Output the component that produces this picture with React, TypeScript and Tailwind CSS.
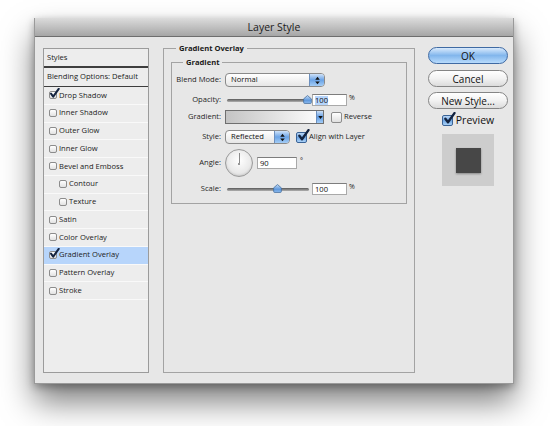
import React from "react";

const FONT = { fontFamily: '"Open Sans", "Liberation Sans", sans-serif' };

function CheckMark({ className = "" }: { className?: string }) {
  return (
    <svg viewBox="0 0 12 12" className={className}>
      <path
        d="M2.2 6.2 L4.6 9.4 L10.6 1"
        fill="none"
        stroke="#13233f"
        strokeWidth="2.2"
        strokeLinecap="round"
        strokeLinejoin="round"
      />
    </svg>
  );
}

function ListBox({ checked }: { checked?: boolean }) {
  return (
    <span className="relative flex h-[8px] w-[8px] shrink-0 rounded-[2px] border border-[#8c8c8c] bg-gradient-to-b from-white to-[#e2e2e2]">
      {checked && <CheckMark className="absolute left-[-1px] top-[-4px] h-[11px] w-[11px]" />}
    </span>
  );
}

function AquaCheck({ checked }: { checked?: boolean }) {
  return checked ? (
    <span className="relative flex h-[11px] w-[11px] shrink-0 rounded-[2px] border border-[#3a6396] bg-gradient-to-b from-[#bcd8f6] via-[#6fa6e4] to-[#a9d1f7]">
      <CheckMark className="absolute left-[0px] top-[-4px] h-[13px] w-[13px]" />
    </span>
  ) : (
    <span className="flex h-[11px] w-[11px] shrink-0 rounded-[2px] border border-[#8c8c8c] bg-gradient-to-b from-white to-[#e0e0e0]" />
  );
}

function Row({
  label,
  checked,
  selected,
  indent,
}: {
  label: string;
  checked?: boolean;
  selected?: boolean;
  indent?: boolean;
}) {
  return (
    <div
      className={`flex h-[17.75px] items-center gap-[2px] border-b border-[#f9f9f9] ${
        indent ? "pl-[15px]" : "pl-[5px]"
      } ${selected ? "bg-[#b7d5fb]" : ""}`}
    >
      <ListBox checked={checked} />
      <span className="text-[7.6px] leading-none text-[#1b1b1b]">{label}</span>
    </div>
  );
}

function Thumb() {
  return (
    <svg viewBox="0 0 10 10" className="h-[9px] w-[9px]">
      <defs>
        <linearGradient id="tg" x1="0" y1="0" x2="0" y2="1">
          <stop offset="0" stopColor="#c5ddf7" />
          <stop offset="0.6" stopColor="#5f98dc" />
          <stop offset="1" stopColor="#8fbdf0" />
        </linearGradient>
      </defs>
      <path d="M5 0.6 L9.3 4.3 V8.2 Q9.3 9.4 8.1 9.4 H1.9 Q0.7 9.4 0.7 8.2 V4.3 Z" fill="url(#tg)" stroke="#3d6797" strokeWidth="0.8" />
    </svg>
  );
}

function Slider({ pos }: { pos: number }) {
  return (
    <div className="ml-[3px] flex h-[12px] w-[82px] items-center">
      <div className="relative h-[3px] w-full rounded-full bg-gradient-to-b from-[#595959] to-[#b2b2b2]">
        <div className="absolute top-[-4px]" style={{ left: pos - 4.5 }}>
          <Thumb />
        </div>
      </div>
    </div>
  );
}

function Input({ value, w, selected }: { value: string; w: string; selected?: boolean }) {
  return (
    <div className={`flex h-[12px] ${w} items-center border border-[#a9a9a9] border-t-[#7d7d7d] bg-white pl-[2px]`}>
      <span className={`text-[7.6px] leading-[9px] text-[#111] ${selected ? "bg-[#b5d4fb]" : ""}`}>{value}</span>
    </div>
  );
}

function UpDown() {
  return (
    <span className="flex h-full w-[15px] items-center justify-center rounded-r-[3px] border-l border-[#6c8fbd] bg-gradient-to-b from-[#cfe2f8] via-[#6aa3e6] to-[#a4cdf6]">
      <svg viewBox="0 0 8 10" className="h-[9px] w-[7px]">
        <path d="M4 0.8 L6.6 4 H1.4 Z" fill="#111" />
        <path d="M4 9.2 L6.6 6 H1.4 Z" fill="#111" />
      </svg>
    </span>
  );
}

function Select({ value, w }: { value: string; w: string }) {
  return (
    <div className={`flex h-[14px] ${w} items-center rounded-[4px] border border-[#8a8a8a] bg-gradient-to-b from-white to-[#e6e6e6]`}>
      <span className="flex-1 pl-[5px] text-[7.6px] leading-none text-[#111]">{value}</span>
      <UpDown />
    </div>
  );
}

function Label({ children }: { children: React.ReactNode }) {
  return <span className="w-[50px] shrink-0 pr-[1px] text-right text-[7.6px] leading-none text-[#1e1e1e]">{children}</span>;
}

function Button({ children, primary }: { children: React.ReactNode; primary?: boolean }) {
  return (
    <div
      className={`flex h-[17px] w-[80px] items-center justify-center rounded-full border text-[10px] leading-none text-[#111] ${
        primary
          ? "border-[#3f6aa3] bg-gradient-to-b from-[#d9eafc] via-[#82b6ec] to-[#b8dbfc]"
          : "border-[#858585] bg-gradient-to-b from-white via-[#f2f2f2] to-[#dcdcdc]"
      }`}
    >
      {children}
    </div>
  );
}

export default function App() {
  return (
    <div className="h-[426px] w-[550px] bg-white pl-[34px] pt-[18px]" style={FONT}>
      <div className="flex h-[366px] w-[480px] flex-col border-x border-b border-[#9a9a9a] bg-[#e7e7e7] shadow-[0_18px_30px_rgba(0,0,0,0.5),0_3px_8px_rgba(0,0,0,0.3)]">
        {/* title bar */}
        <div className="flex h-[19px] shrink-0 items-center justify-center border-b border-[#6e6e6e] bg-gradient-to-b from-[#dcdcdc] to-[#a6a6a6]">
          <span className="text-[10.5px] leading-none text-[#1b1b1b]">Layer Style</span>
        </div>

        {/* body */}
        <div className="flex pl-[8px] pt-[5px]">
          {/* styles list */}
          <div className="mt-[6px] flex h-[325px] w-[106px] shrink-0 flex-col border border-[#9b9b9b] bg-[#ededed]">
            <div className="flex h-[19px] items-center border-b-2 border-[#3e3e3e] pl-[3px]">
              <span className="text-[7.6px] leading-none text-[#1b1b1b]">Styles</span>
            </div>
            <div className="flex h-[19px] items-center border-b border-[#3e3e3e] pl-[3px]">
              <span className="text-[7.6px] leading-none text-[#1b1b1b]">Blending Options: Default</span>
            </div>
            <Row label="Drop Shadow" checked />
            <Row label="Inner Shadow" />
            <Row label="Outer Glow" />
            <Row label="Inner Glow" />
            <Row label="Bevel and Emboss" />
            <Row label="Contour" indent />
            <Row label="Texture" indent />
            <Row label="Satin" />
            <Row label="Color Overlay" />
            <Row label="Gradient Overlay" checked selected />
            <Row label="Pattern Overlay" />
            <Row label="Stroke" />
          </div>

          {/* Gradient Overlay fieldset */}
          <fieldset className="ml-[14px] h-[331px] w-[250px] shrink-0 border border-[#a3a3a3] px-[7px]">
            <legend className="ml-[5px] px-[3px] text-[7.6px] font-bold leading-[12px] text-[#1b1b1b]">Gradient Overlay</legend>
            <fieldset className="mt-[2px] h-[148px] w-[236px] border border-[#a3a3a3]">
              <legend className="ml-[11px] px-[3px] text-[7.6px] font-bold leading-[12px] text-[#1b1b1b]">Gradient</legend>
              <div className="flex flex-col">
                <div className="mt-[5px] flex h-[14px] items-center gap-[3px]">
                  <Label>Blend Mode:</Label>
                  <Select value="Normal" w="w-[100px]" />
                </div>
                <div className="mt-[7px] flex h-[12px] items-center">
                  <Label>Opacity:</Label>
                  <div className="ml-[2px]">
                    <Slider pos={80} />
                  </div>
                  <div className="ml-[3px]">
                    <Input value="100" w="w-[35px]" selected />
                  </div>
                  <span className="ml-[2px] self-start text-[7px] leading-none text-[#222]">%</span>
                </div>
                <div className="mt-[4px] flex h-[14px] items-center gap-[3px]">
                  <Label>Gradient:</Label>
                  <div className="flex h-[14px] w-[99px] border border-[#6f6f6f]">
                    <div className="flex-1 bg-gradient-to-r from-[#c4c4c4] to-[#fbfbfb]" />
                    <div className="flex w-[7px] items-center justify-center border-l border-[#6c8fbd] bg-gradient-to-b from-[#cfe2f8] via-[#5f9be3] to-[#a4cdf6]">
                      <svg viewBox="0 0 6 4" className="h-[3px] w-[5px]">
                        <path d="M0 0 H6 L3 4 Z" fill="#111" />
                      </svg>
                    </div>
                  </div>
                  <div className="ml-[4px] flex items-center gap-[2px]">
                    <AquaCheck />
                    <span className="text-[7.6px] leading-none text-[#1e1e1e]">Reverse</span>
                  </div>
                </div>
                <div className="mt-[6px] flex h-[14px] items-center gap-[3px]">
                  <Label>Style:</Label>
                  <Select value="Reflected" w="w-[65px]" />
                  <div className="ml-[3px] flex items-center gap-[2px]">
                    <AquaCheck checked />
                    <span className="text-[7.6px] leading-none text-[#1e1e1e]">Align with Layer</span>
                  </div>
                </div>
                <div className="mt-[5px] flex h-[28px] items-center gap-[3px]">
                  <Label>Angle:</Label>
                  <div className="flex h-[28px] w-[28px] shrink-0 flex-col items-center rounded-full border border-[#9a9a9a] bg-[radial-gradient(circle_at_50%_40%,#ffffff,#dadada)] shadow-[inset_0_-1px_2px_rgba(0,0,0,0.12)]">
                    <div className="mt-[3px] h-[10px] w-px bg-[#8a8a8a]" />
                    <div className="h-[2px] w-[2px] rounded-full bg-[#777]" />
                  </div>
                  <div className="ml-[1px]">
                    <Input value="90" w="w-[40px]" />
                  </div>
                  <span className="self-start pt-[8px] text-[7px] leading-none text-[#222]">°</span>
                </div>
                <div className="mt-[6px] flex h-[12px] items-center">
                  <Label>Scale:</Label>
                  <div className="ml-[2px]">
                    <Slider pos={50} />
                  </div>
                  <div className="ml-[3px]">
                    <Input value="100" w="w-[35px]" />
                  </div>
                  <span className="ml-[2px] self-start text-[7px] leading-none text-[#222]">%</span>
                </div>
              </div>
            </fieldset>
          </fieldset>

          {/* buttons column */}
          <div className="ml-[13px] mt-[5px] flex w-[80px] shrink-0 flex-col items-center">
            <Button primary>OK</Button>
            <div className="mt-[6px]">
              <Button>Cancel</Button>
            </div>
            <div className="mt-[5px]">
              <Button>New Style...</Button>
            </div>
            <div className="mt-[6px] flex items-center gap-[3px]">
              <AquaCheck checked />
              <span className="text-[10.5px] leading-none text-[#111]">Preview</span>
            </div>
            <div className="mt-[8px] flex h-[52px] w-[52px] items-center justify-center bg-[#cdcdcd]">
              <div className="h-[25px] w-[25px] bg-[#474747] shadow-[0_1px_2px_rgba(0,0,0,0.35)]" />
            </div>
          </div>
        </div>
      </div>
    </div>
  );
}
